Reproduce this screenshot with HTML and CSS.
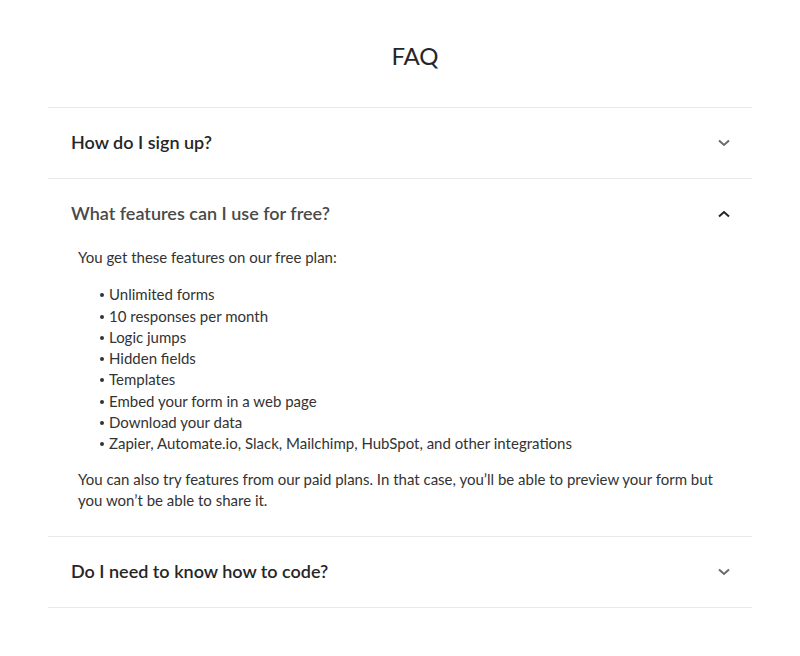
FILE: index.html
```html
<!DOCTYPE html>
<html lang="en">
<head>
    <meta charset="UTF-8">
    <meta name="viewport" content="width=device-width, initial-scale=1.0">
    <title>FAQ</title>
    <link rel="stylesheet" href="styles.css">
</head>
<body>
    <div class="faq">
        <h1>FAQ</h1>

        <div class="faq-list">
            <div class="faq-item">
                <div class="faq-question">
                    <span>How do I sign up?</span>
                    <svg class="chevron" width="12" height="8" viewBox="0 0 12 8"><path d="M1 1.5 L6 6 L11 1.5" fill="none" stroke="currentColor" stroke-width="2"/></svg>
                </div>
            </div>

            <div class="faq-item open">
                <div class="faq-question">
                    <span>What features can I use for free?</span>
                    <svg class="chevron" width="12" height="8" viewBox="0 0 12 8"><path d="M1 6.5 L6 2 L11 6.5" fill="none" stroke="currentColor" stroke-width="2"/></svg>
                </div>
                <div class="faq-answer">
                    <p>You get these features on our free plan:</p>
                    <ul>
                        <li>Unlimited forms</li>
                        <li>10 responses per month</li>
                        <li>Logic jumps</li>
                        <li>Hidden fields</li>
                        <li>Templates</li>
                        <li>Embed your form in a web page</li>
                        <li>Download your data</li>
                        <li>Zapier, Automate.io, Slack, Mailchimp, HubSpot, and other integrations</li>
                    </ul>
                    <p>You can also try features from our paid plans. In that case, you’ll be able to preview your form but you won’t be able to share it.</p>
                </div>
            </div>

            <div class="faq-item">
                <div class="faq-question">
                    <span>Do I need to know how to code?</span>
                    <svg class="chevron" width="12" height="8" viewBox="0 0 12 8"><path d="M1 1.5 L6 6 L11 1.5" fill="none" stroke="currentColor" stroke-width="2"/></svg>
                </div>
            </div>
        </div>
    </div>
</body>
</html>
```

FILE: styles.css
```css
body {
    margin: 0;
    font-family: 'Lato', 'Noto Sans', sans-serif;
    color: #262627;
    background: #fff;
}

.faq {
    padding: 40px 48px 0;
}

h1 {
    margin: 0 0 35px;
    padding-left: 30px;
    text-align: center;
    font-size: 24px;
    font-weight: 400;
    line-height: 32px;
}

.faq-list {
    border-top: 1px solid #e9e9e9;
}

.faq-item {
    border-bottom: 1px solid #e9e9e9;
}

.faq-question {
    display: flex;
    align-items: center;
    justify-content: space-between;
    height: 70px;
    padding: 0 22px 3px 23px;
    box-sizing: border-box;
    font-size: 18px;
    font-weight: 600;
}

.faq-question .chevron {
    color: #6b6b6b;
    margin-top: 2px;
}

.open .faq-question {
    color: #4a4a4a;
}

.open .faq-question .chevron {
    color: #262627;
}

.faq-answer {
    margin-top: -2px;
    padding: 0 30px 25px;
    font-size: 15px;
    line-height: 21.3px;
    color: #333;
}

.faq-answer p {
    margin: 0;
}

.faq-answer ul {
    list-style: none;
    margin: 16px 0 14px;
    padding-left: 31px;
}

.faq-answer li {
    position: relative;
}

.faq-answer li::before {
    content: "";
    position: absolute;
    left: -9px;
    top: 9px;
    width: 4px;
    height: 4px;
    border-radius: 50%;
    background: #333;
}
```
